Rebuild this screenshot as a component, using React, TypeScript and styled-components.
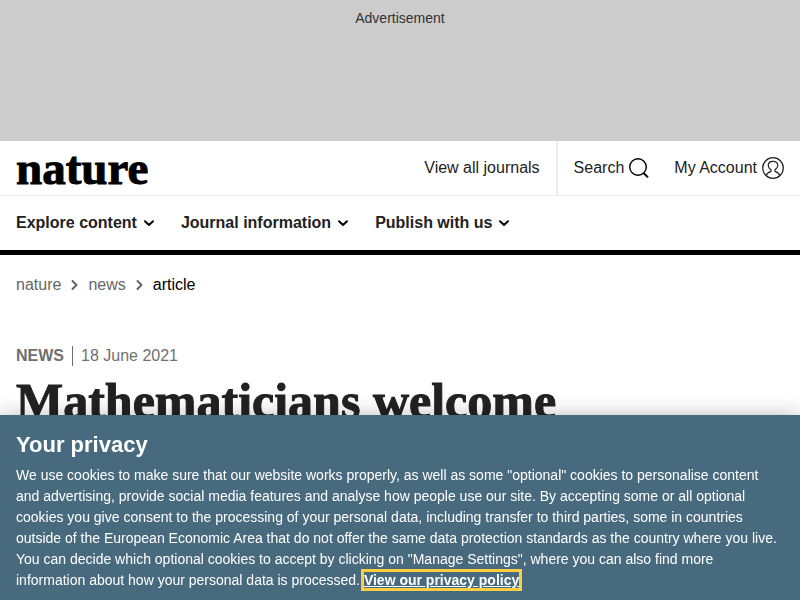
import React from "react";
import styled, { createGlobalStyle } from "styled-components";

const GlobalStyle = createGlobalStyle`
  *, *::before, *::after { box-sizing: border-box; }
  body {
    margin: 0;
    background: #fff;
    color: #222;
    font: 16px/24px "Liberation Sans", Arial, sans-serif;
  }
`;

const Advert = styled.aside`
  display: flex;
  justify-content: center;
  min-height: 141px;
  padding: 8px;
  background: #ccc;
  color: #333;
  font-size: 14px;
  line-height: 20px;
`;

const AdvertLabel = styled.p`
  margin: 0;
`;

const Header = styled.header`
  border-bottom: 5px solid #000;
`;

const TopBar = styled.div`
  display: flex;
  align-items: stretch;
  justify-content: space-between;
  height: 55px;
  padding: 0 16px;
  border-bottom: 1px solid #eee;
`;

const Logo = styled.a`
  display: flex;
  align-items: center;
  color: #000;
  font: bold 47px/54px "Liberation Serif", "Times New Roman", serif;
  -webkit-text-stroke: 1px #000;
  text-decoration: none;
`;

const TopLinks = styled.nav`
  display: flex;
`;

const TopLink = styled.a<{ $divided?: boolean }>`
  display: flex;
  align-items: center;
  gap: 5px;
  padding-right: ${(p) => (p.$divided ? "16px" : "0")};
  margin-right: ${(p) => (p.$divided ? "16px" : "0")};
  border-right: ${(p) => (p.$divided ? "2px solid #eee" : "none")};
  color: #222;
  text-decoration: none;

  &:last-child {
    margin-left: 25px;
  }
`;

const MenuBar = styled.nav`
  display: flex;
  align-items: center;
  gap: 26px;
  height: 54px;
  padding: 0 16px;
`;

const MenuButton = styled.button`
  display: flex;
  align-items: center;
  gap: 6px;
  padding: 0;
  border: 0;
  background: none;
  color: #222;
  font: inherit;
  font-weight: bold;
  cursor: pointer;
`;

const Main = styled.main`
  padding: 18px 16px 24px;
`;

const Crumbs = styled.ol`
  display: flex;
  margin: 0;
  padding: 0;
  list-style: none;
`;

const Crumb = styled.li`
  display: flex;
  align-items: center;
  color: #000;

  svg {
    margin: 0 9px;
    color: #666;
  }
`;

const CrumbLink = styled.a`
  color: #666;
  text-decoration: none;
`;

const Meta = styled.ul`
  display: flex;
  gap: 8px;
  margin: 49px 0 0;
  padding: 0;
  color: #6f6f6f;
  line-height: 20px;
  list-style: none;
`;

const MetaItem = styled.li<{ $strong?: boolean }>`
  font-weight: ${(p) => (p.$strong ? "bold" : "normal")};

  & + & {
    padding-left: 8px;
    border-left: 1px solid #6f6f6f;
  }
`;

const Title = styled.h1`
  margin: 6px 0 0;
  color: #222;
  font: bold 50px/58px "Liberation Serif", "Times New Roman", serif;
  -webkit-text-stroke: 1px #222;
`;

const Privacy = styled.section`
  position: fixed;
  right: 0;
  bottom: 0;
  left: 0;
  padding: 16px 16px 9px;
  background: #486a7e;
  box-shadow: 0 0 20px rgba(0, 0, 0, 0.25);
  color: #fff;
  font-size: 14px;
  line-height: 21px;
`;

const PrivacyTitle = styled.h2`
  margin: 0 0 7px;
  font-size: 22px;
  line-height: 27px;
`;

const PrivacyText = styled.p`
  margin: 0;
`;

const PolicyLink = styled.a`
  color: #fff;
  font-weight: bold;
  outline: 3px solid #fece3e;
`;

const SearchIcon = () => (
  <svg width="20" height="22" viewBox="0 0 20 22" fill="none" stroke="#000" aria-hidden="true">
    <circle cx="9" cy="10" r="8.3" strokeWidth="1.4" />
    <path d="M14.6 16 19 20.4" strokeWidth="2" />
  </svg>
);

const AccountIcon = () => (
  <svg width="22" height="22" viewBox="0 0 22 22" fill="none" stroke="#222" strokeWidth="1.2" aria-hidden="true">
    <circle cx="11" cy="11" r="10.3" />
    <path d="M4.2 18.4C5 16.2 6.3 15.2 9 14.4V12.8C7.3 11.4 6.2 10.2 6.2 8.4C6.2 6 8.2 4.4 11 4.4S15.8 6 15.8 8.4C15.8 10.2 14.7 11.4 13 12.8V14.4C15.7 15.2 17 16.2 17.8 18.4" />
  </svg>
);

const ChevronDown = () => (
  <svg width="12" height="8" viewBox="0 0 12 8" fill="none" stroke="#000" strokeWidth="2" strokeLinecap="round" strokeLinejoin="round" aria-hidden="true">
    <path d="M2 2.2 6 6 10 2.2" />
  </svg>
);

const ChevronRight = () => (
  <svg width="9" height="12" viewBox="0 0 9 12" fill="none" stroke="currentColor" strokeWidth="2" strokeLinecap="round" strokeLinejoin="round" aria-hidden="true">
    <path d="M2.5 2 6.5 6 2.5 10" />
  </svg>
);

const menus = ["Explore content", "Journal information", "Publish with us"];

export default function App() {
  return (
    <>
      <GlobalStyle />
      <Advert>
        <AdvertLabel>Advertisement</AdvertLabel>
      </Advert>
      <Header>
        <TopBar>
          <Logo href="#home">nature</Logo>
          <TopLinks>
            <TopLink href="#journals" $divided>View all journals</TopLink>
            <TopLink href="#search">Search <SearchIcon /></TopLink>
            <TopLink href="#account">My Account <AccountIcon /></TopLink>
          </TopLinks>
        </TopBar>
        <MenuBar>
          {menus.map((label) => (
            <MenuButton key={label} type="button">
              {label}
              <ChevronDown />
            </MenuButton>
          ))}
        </MenuBar>
      </Header>
      <Main>
        <nav aria-label="Breadcrumbs">
          <Crumbs>
            <Crumb><CrumbLink href="#nature">nature</CrumbLink><ChevronRight /></Crumb>
            <Crumb><CrumbLink href="#news">news</CrumbLink><ChevronRight /></Crumb>
            <Crumb>article</Crumb>
          </Crumbs>
        </nav>
        <Meta>
          <MetaItem $strong>NEWS</MetaItem>
          <MetaItem>18 June 2021</MetaItem>
        </Meta>
        <Title>Mathematicians welcome</Title>
      </Main>
      <Privacy aria-labelledby="privacy-title">
        <PrivacyTitle id="privacy-title">Your privacy</PrivacyTitle>
        <PrivacyText>
          We use cookies to make sure that our website works properly, as well as some "optional" cookies to
          personalise content and advertising, provide social media features and analyse how people use our site.
          By accepting some or all optional cookies you give consent to the processing of your personal data,
          including transfer to third parties, some in countries outside of the European Economic Area that do not
          offer the same data protection standards as the country where you live. You can decide which optional
          cookies to accept by clicking on "Manage Settings", where you can also find more information about how
          your personal data is processed. <PolicyLink href="#privacy">View our privacy policy</PolicyLink>
        </PrivacyText>
      </Privacy>
    </>
  );
}
